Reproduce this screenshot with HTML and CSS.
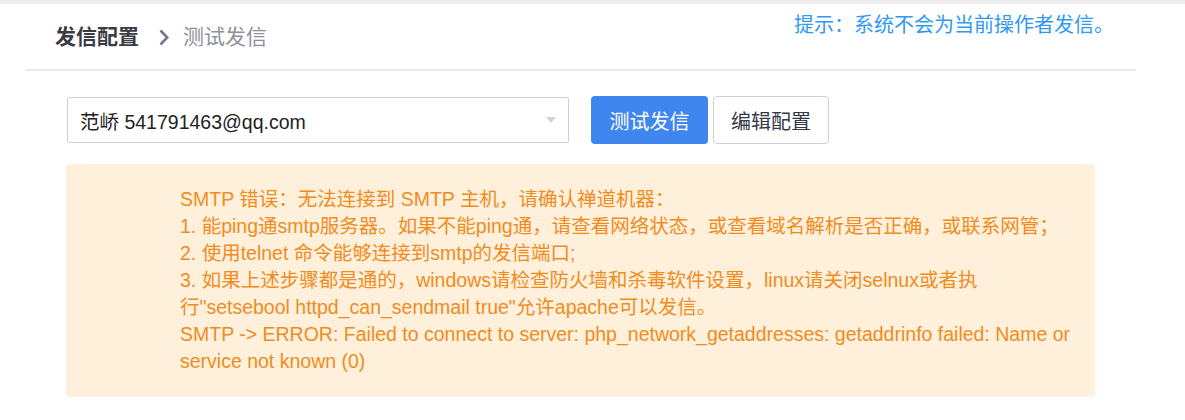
FILE: index.html
```html
<!DOCTYPE html>
<html lang="zh-CN">
<head>
<meta charset="utf-8">
<title>测试发信</title>
<link rel="stylesheet" href="styles.css">
</head>
<body>
<div class="topbar"></div>
<div class="panel">
  <div class="header">
    <div class="crumbs">
      <span class="crumb-main">发信配置</span>
      <svg class="chevron" width="10" height="17" viewBox="0 0 10 17"><polyline points="1.5,1.5 8.3,8.5 1.5,15.5" fill="none" stroke="#6f7787" stroke-width="2.6"/></svg>
      <span class="crumb-sub">测试发信</span>
    </div>
    <div class="hint">提示：系统不会为当前操作者发信。</div>
  </div>
  <div class="content">
    <div class="toolbar">
      <div class="select">
        <span class="select-text">范峤 541791463@qq.com</span>
        <span class="caret"></span>
      </div>
      <button class="btn btn-primary">测试发信</button>
      <button class="btn btn-default">编辑配置</button>
    </div>
    <div class="alert">
      <div class="alert-line">SMTP 错误：无法连接到 SMTP 主机，请确认禅道机器：</div>
      <div class="alert-line">1. 能ping通smtp服务器。如果不能ping通，请查看网络状态，或查看域名解析是否正确，或联系网管；</div>
      <div class="alert-line">2. 使用telnet 命令能够连接到smtp的发信端口;</div>
      <div class="alert-line">3. 如果上述步骤都是通的，windows请检查防火墙和杀毒软件设置，linux请关闭selnux或者执行"setsebool httpd_can_sendmail true"允许apache可以发信。</div>
      <div class="alert-line">SMTP -&gt; ERROR: Failed to connect to server: php_network_getaddresses: getaddrinfo failed: Name or service not known (0)</div>
    </div>
  </div>
</div>
</body>
</html>
```
FILE: styles.css
```css
html, body {
  margin: 0;
  padding: 0;
  background: #ffffff;
}
body {
  font-family: "Liberation Sans", "Noto Sans CJK SC", sans-serif;
  color: #333333;
}
.topbar {
  height: 4px;
  background: #ececec;
}
.panel {
  width: 1110px;
  margin-left: 26px;
}
.header {
  display: flex;
  justify-content: space-between;
  align-items: flex-start;
  height: 65px;
  border-bottom: 2px solid #ebebeb;
}
.crumbs {
  display: flex;
  align-items: center;
  padding-left: 29px;
  margin-top: 18px;
  height: 30px;
  font-size: 21px;
  line-height: 30px;
}
.crumb-main {
  font-weight: bold;
  color: #3b3b44;
}
.chevron {
  margin-left: 20px;
  margin-right: 14px;
}
.crumb-sub {
  color: #8c919b;
}
.hint {
  margin-top: 7px;
  padding-right: 22px;
  font-size: 20px;
  line-height: 28px;
  color: #2f9af1;
}
.content {
  padding-left: 40px;
}
.toolbar {
  display: flex;
  align-items: center;
  margin-top: 25px;
}
.select {
  box-sizing: border-box;
  width: 502px;
  height: 46px;
  margin-left: 1px;
  border: 1px solid #cfcfcf;
  border-radius: 2px;
  display: flex;
  align-items: center;
  justify-content: space-between;
  padding: 0 12px 0 12px;
  font-size: 19.5px;
  color: #222222;
}
.caret {
  width: 0;
  height: 0;
  border-left: 5.5px solid transparent;
  border-right: 5.5px solid transparent;
  border-top: 6px solid #cfd0d8;
}
.btn {
  box-sizing: border-box;
  height: 48px;
  border-radius: 4px;
  font-family: "Liberation Sans", "Noto Sans CJK SC", sans-serif;
  font-size: 20px;
  padding: 0;
  cursor: pointer;
}
.btn-primary {
  width: 117px;
  margin-left: 22px;
  background: #3f86ee;
  border: none;
  color: #ffffff;
}
.btn-default {
  width: 116px;
  margin-left: 5px;
  background: #ffffff;
  border: 1.5px solid #ccd0dc;
  color: #333a48;
}
.alert {
  box-sizing: border-box;
  width: 1029px;
  margin-top: 20px;
  padding: 22px 17px 22px 114px;
  background: #fff0dc;
  border-radius: 4px;
  color: #f08c1d;
  font-size: 19.5px;
  line-height: 27px;
}
```
